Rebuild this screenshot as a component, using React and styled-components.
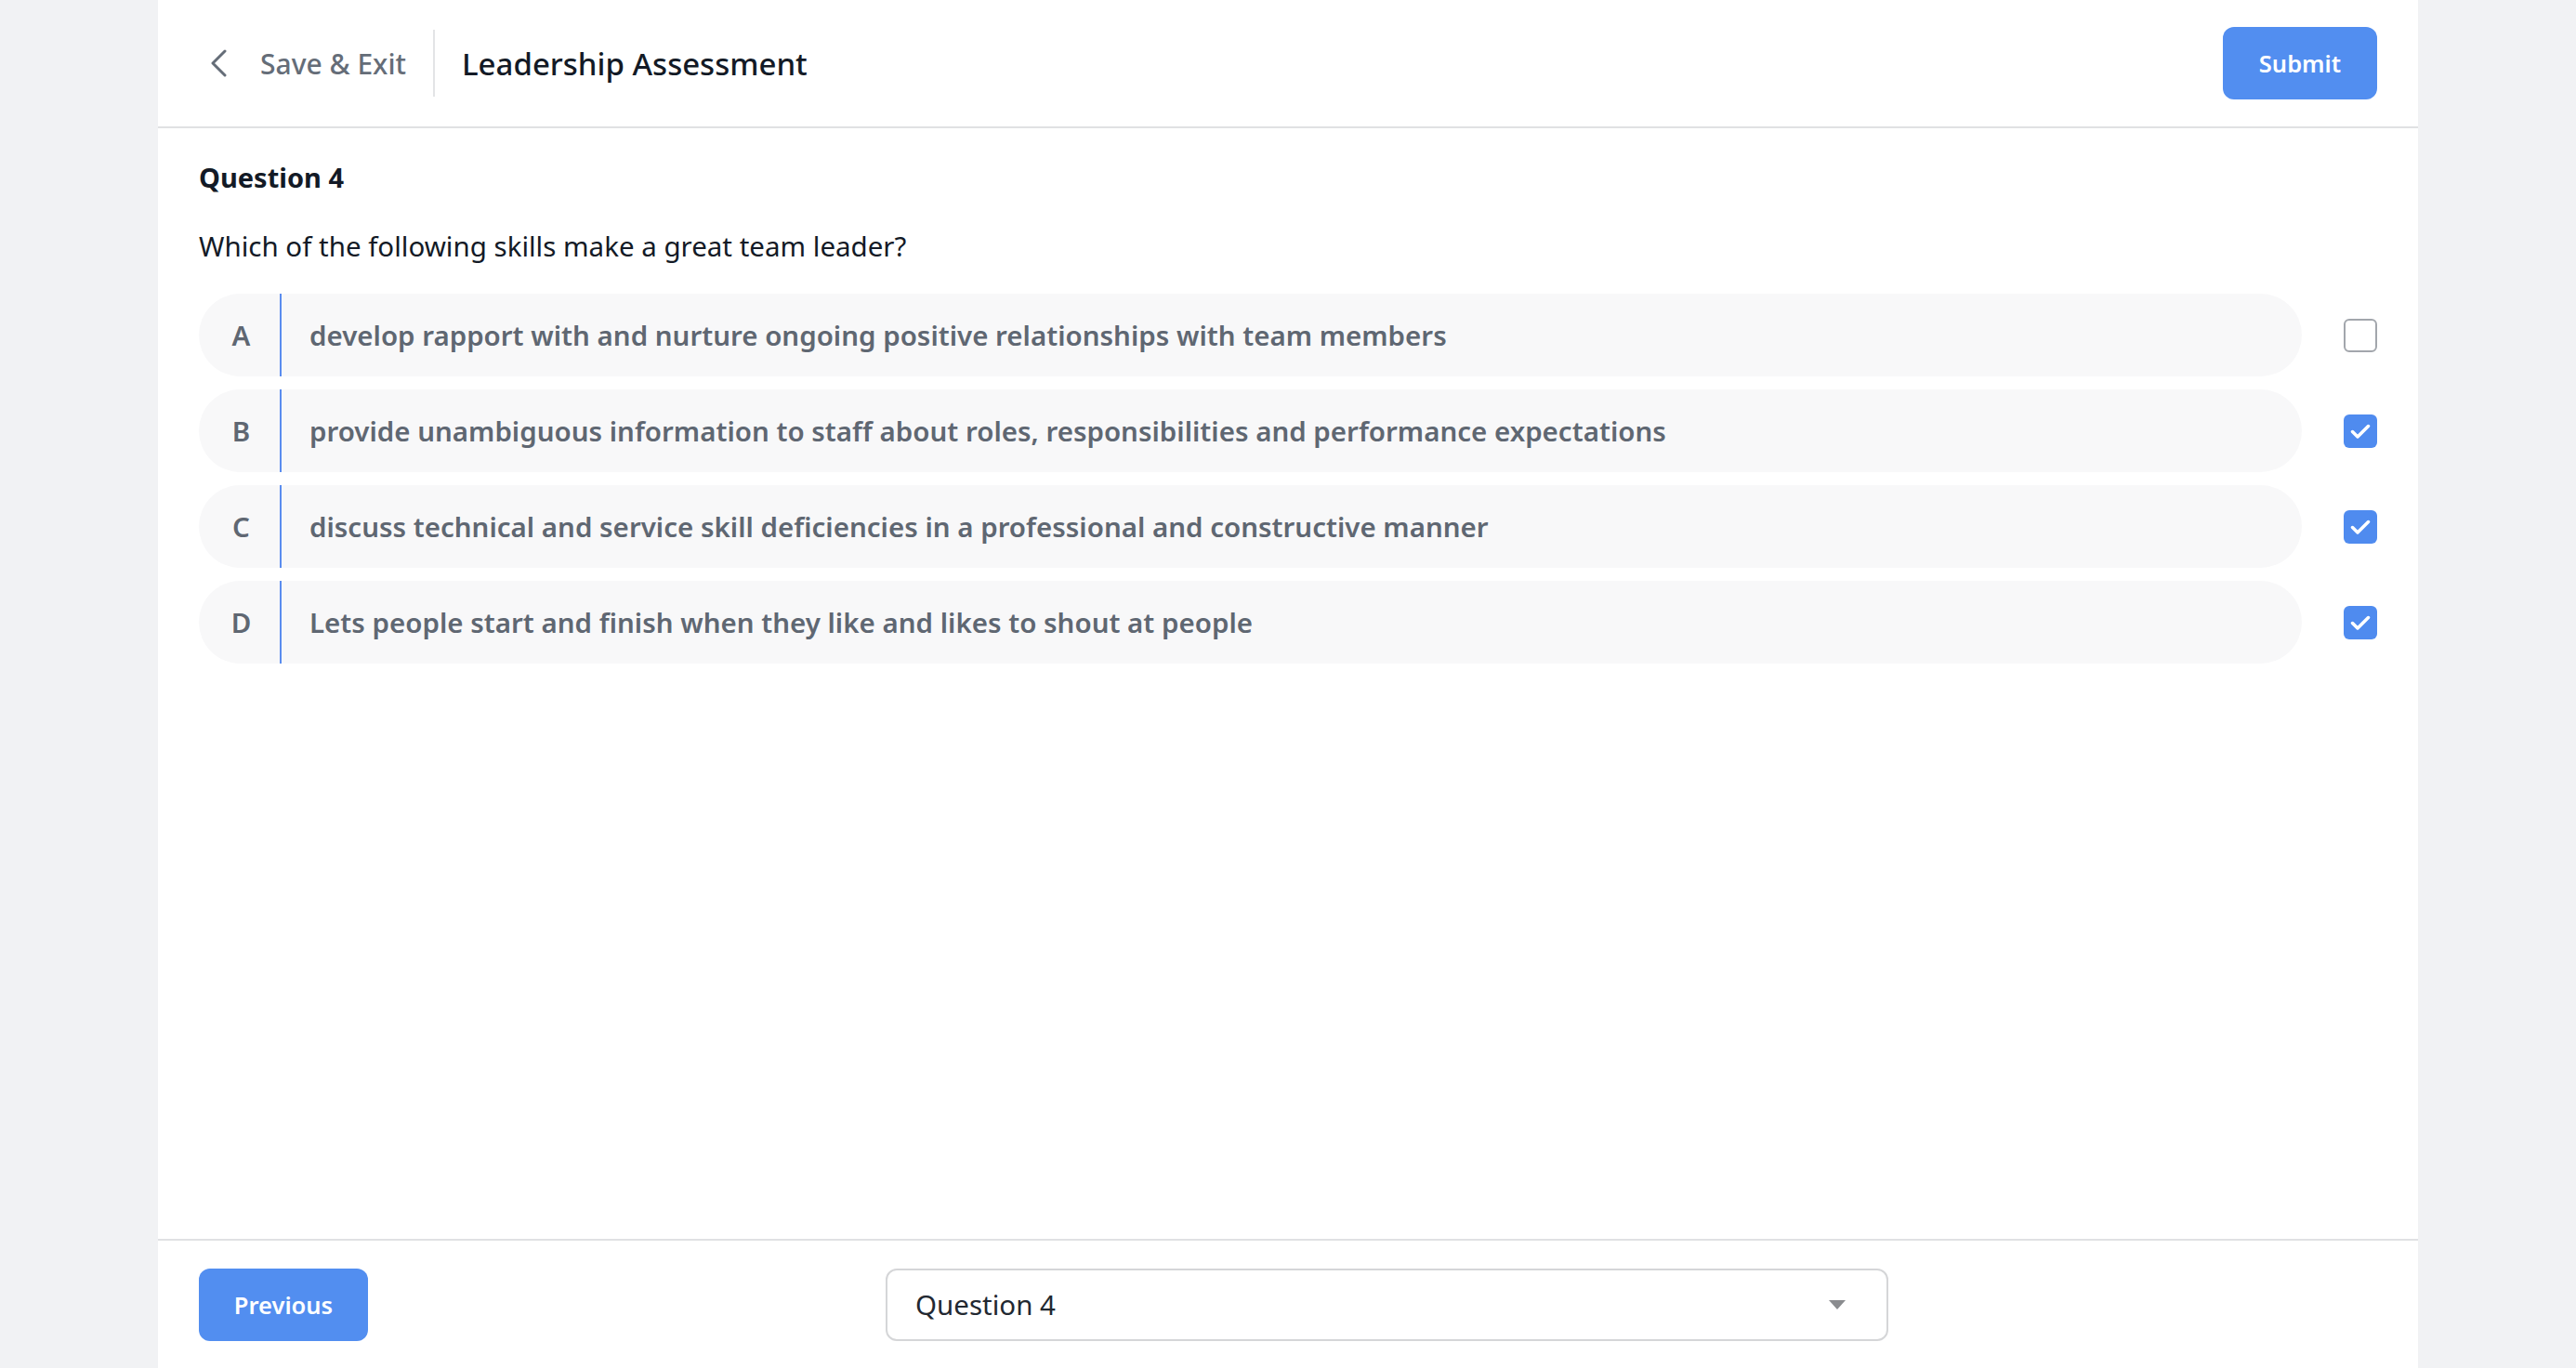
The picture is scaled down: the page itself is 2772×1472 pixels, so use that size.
import React from 'react'
import styled, { createGlobalStyle } from 'styled-components';

const GlobalStyle = createGlobalStyle`
  * {
    box-sizing: border-box;
  }
  body {
    margin: 0;
    background: #f1f2f4;
    font-family: "Noto Sans", "Open Sans", sans-serif;
  }
`;

const options = [
  { letter: 'A', text: 'develop rapport with and nurture ongoing positive relationships with team members', checked: false },
  { letter: 'B', text: 'provide unambiguous information to staff about roles, responsibilities and performance expectations', checked: true },
  { letter: 'C', text: 'discuss technical and service skill deficiencies in a professional and constructive manner', checked: true },
  { letter: 'D', text: 'Lets people start and finish when they like and likes to shout at people', checked: true },
];

function ChevronLeft() {
  return (
    <svg width="18" height="30" viewBox="0 0 18 30" fill="none">
      <polyline points="16,2 3,15 16,28" stroke="currentColor" strokeWidth="3" strokeLinecap="round" strokeLinejoin="round" />
    </svg>
  );
}

function Check() {
  return (
    <svg width="36" height="36" viewBox="0 0 36 36" fill="none">
      <polyline points="9.5,18.5 15,24 26.5,12.5" stroke="#fff" strokeWidth="3.5" strokeLinecap="round" strokeLinejoin="round" />
    </svg>
  );
}

function Caret() {
  return (
    <svg width="18" height="10" viewBox="0 0 18 10">
      <polygon points="0,0 18,0 9,10" fill="#8a8c8f" />
    </svg>
  );
}

function App() {
  return (
    <>
      <GlobalStyle />
      <Shell>
        <Header>
          <BackLink>
            <ChevronLeft />
            <span>Save &amp; Exit</span>
          </BackLink>
          <Divider />
          <Title>Leadership Assessment</Title>
          <PrimaryButton $width={166} $push>Submit</PrimaryButton>
        </Header>

        <Content>
          <QuestionLabel>Question 4</QuestionLabel>
          <Prompt>Which of the following skills make a great team leader?</Prompt>
          <OptionList>
            {options.map((o) => (
              <OptionRow key={o.letter}>
                <Pill>
                  <Letter>{o.letter}</Letter>
                  <OptionText>{o.text}</OptionText>
                </Pill>
                <Checkbox $checked={o.checked}>{o.checked && <Check />}</Checkbox>
              </OptionRow>
            ))}
          </OptionList>
        </Content>

        <Footer>
          <PrimaryButton $width={182}>Previous</PrimaryButton>
          <Select>
            <span>Question 4</span>
            <Caret />
          </Select>
        </Footer>
      </Shell>
    </>
  );
}

const Shell = styled.div`
  width: 2432px;
  height: 100vh;
  margin: 0 auto;
  background: #fff;
  display: flex;
  flex-direction: column;
`;

const Header = styled.header`
  height: 138px;
  flex-shrink: 0;
  display: flex;
  align-items: center;
  padding: 0 44px 0 56px;
  border-bottom: 2px solid #e0e1e3;
`;

const BackLink = styled.div`
  display: flex;
  align-items: center;
  gap: 36px;
  color: #656d78;
  font-size: 30px;
  font-weight: 500;
  cursor: pointer;
`;

const Divider = styled.div`
  width: 2px;
  height: 72px;
  background: #e3e4e6;
  margin: 0 29px;
`;

const Title = styled.h1`
  margin: 0;
  font-size: 33px;
  font-weight: 500;
  color: #131a26;
`;

const PrimaryButton = styled.button`
  width: ${(p) => p.$width}px;
  height: 78px;
  margin-left: ${(p) => (p.$push ? 'auto' : '0')};
  border: none;
  border-radius: 12px;
  background: #528ef0;
  color: #fff;
  font-family: "Noto Sans", sans-serif;
  font-size: 25.5px;
  font-weight: 600;
  cursor: pointer;
`;

const Content = styled.main`
  flex: 1;
  padding: 33px 44px 0;
`;

const QuestionLabel = styled.h2`
  margin: 0;
  font-size: 29px;
  font-weight: 700;
  color: #131a26;
`;

const Prompt = styled.p`
  margin: 34px 0 31px;
  font-size: 29.5px;
  color: #131a26;
`;

const OptionList = styled.div`
  display: flex;
  flex-direction: column;
  gap: 14px;
`;

const OptionRow = styled.div`
  display: flex;
  align-items: center;
  gap: 45px;
`;

const Pill = styled.div`
  flex: 1;
  height: 89px;
  display: flex;
  background: #f8f8f9;
  border-radius: 45px;
  color: #5f6772;
  font-size: 29.5px;
  font-weight: 600;
`;

const Letter = styled.div`
  width: 87px;
  display: flex;
  align-items: center;
  justify-content: center;
  padding-left: 4px;
`;

const OptionText = styled.div`
  flex: 1;
  display: flex;
  align-items: center;
  padding-left: 30px;
  border-left: 2px solid #5b8def;
`;

const Checkbox = styled.div`
  width: 36px;
  height: 36px;
  flex-shrink: 0;
  border-radius: 6px;
  border: ${(p) => (p.$checked ? 'none' : '2px solid #a2a6ac')};
  background: ${(p) => (p.$checked ? '#4f8bef' : '#fff')};
  display: flex;
  align-items: center;
  justify-content: center;
`;

const Footer = styled.footer`
  height: 139px;
  flex-shrink: 0;
  display: flex;
  align-items: center;
  padding: 0 44px;
  border-top: 2px solid #e0e1e3;
`;

const Select = styled.div`
  width: 1079px;
  height: 78px;
  margin-left: 557px;
  display: flex;
  align-items: center;
  justify-content: space-between;
  padding: 0 44px 0 30px;
  border: 2px solid #d5d6d8;
  border-radius: 12px;
  font-size: 29.5px;
  color: #222831;
`;

export default App;
